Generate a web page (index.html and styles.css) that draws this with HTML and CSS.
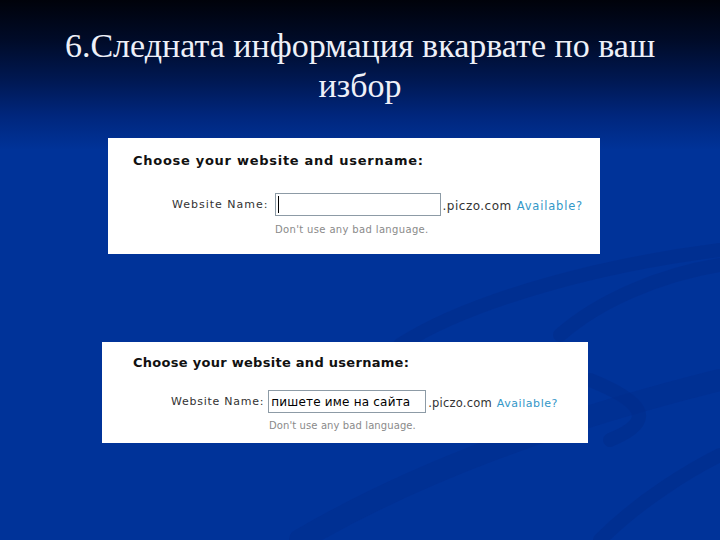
FILE: index.html
```html
<!DOCTYPE html>
<html lang="bg">
<head>
<meta charset="utf-8">
<title>Слайд 6</title>
<link rel="stylesheet" href="styles.css">
</head>
<body>
<div class="slide">
  <svg class="swirls" width="720" height="540" viewBox="0 0 720 540" aria-hidden="true">
    <path d="M400 345 C 470 300, 600 265, 720 250" />
    <path d="M560 335 C 600 300, 660 275, 720 265" />
    <path d="M590 380 C 640 400, 660 420, 610 440" />
    <path d="M300 540 C 420 470, 560 420, 720 380" class="wide" />
    <path d="M600 540 C 640 500, 690 470, 720 455" />
  </svg>
  <h1 class="title">6.Следната информация вкарвате по ваш избор</h1>

  <section class="panel panel-one">
    <h2 class="panel-heading">Choose your website and username:</h2>
    <div class="field-row">
      <span class="field-label">Website Name:</span>
      <span class="field-input"><span class="caret"></span></span>
      <span class="domain">.piczo.com</span>
      <span class="avail">Available?</span>
    </div>
    <p class="hint">Don't use any bad language.</p>
  </section>

  <section class="panel panel-two">
    <h2 class="panel-heading">Choose your website and username:</h2>
    <div class="field-row">
      <span class="field-label">Website Name:</span>
      <span class="field-input"><span class="typed">пишете име на сайта</span></span>
      <span class="domain">.piczo.com</span>
      <span class="avail">Available?</span>
    </div>
    <p class="hint">Don't use any bad language.</p>
  </section>
</div>
</body>
</html>
```

FILE: styles.css
```css
html, body {
  margin: 0;
  padding: 0;
}

body {
  width: 720px;
  height: 540px;
  overflow: hidden;
}

.slide {
  position: relative;
  width: 720px;
  height: 540px;
  background: linear-gradient(180deg, #00020a 0px, #000b28 40px, #001852 80px, #00267c 115px, #003399 150px, #003399 540px);
  display: flex;
  flex-direction: column;
}

.swirls {
  position: absolute;
  left: 0;
  top: 0;
  pointer-events: none;
}

.swirls path {
  fill: none;
  stroke: #002d8c;
  stroke-width: 14;
  stroke-linecap: round;
  opacity: 0.6;
}

.swirls path.wide {
  stroke-width: 22;
  opacity: 0.45;
}

.title {
  position: relative;
  margin: 26px auto 0;
  width: 640px;
  height: 80px;
  text-align: center;
  font-family: "Liberation Serif", "DejaVu Serif", serif;
  font-weight: normal;
  font-size: 34px;
  line-height: 40px;
  color: #eef0f8;
}

.panel {
  position: relative;
  background: #ffffff;
  box-sizing: border-box;
  font-family: "DejaVu Sans", Verdana, sans-serif;
}

.panel-one {
  margin: 32px 0 0 108px;
  width: 492px;
  height: 116px;
  padding: 14px 0 0 25px;
}

.panel-two {
  margin: 88px 0 0 102px;
  width: 486px;
  height: 101px;
  padding: 12px 0 0 31px;
}

.panel-heading {
  margin: 0;
  font-size: 13px;
  font-weight: bold;
  letter-spacing: 0.72px;
  line-height: 18px;
  color: #111111;
}

.panel-two .panel-heading {
  letter-spacing: 0.28px;
}

.field-row {
  display: flex;
  align-items: center;
}

.panel-one .field-row {
  margin: 23px 0 0 39px;
}

.panel-two .field-row {
  margin: 18px 0 0 38px;
}

.field-label {
  font-size: 11px;
  letter-spacing: 1px;
  color: #333333;
  margin-right: 6px;
}

.panel-two .field-label {
  letter-spacing: 0.75px;
  margin-right: 4px;
}

.field-input {
  box-sizing: border-box;
  display: flex;
  align-items: center;
  height: 23px;
  border: 1px solid #8d9ba6;
  background: #ffffff;
  padding-left: 2px;
}

.panel-one .field-input {
  width: 166px;
}

.panel-two .field-input {
  width: 158px;
}

.caret {
  display: block;
  width: 1px;
  height: 17px;
  background: #000000;
}

.typed {
  font-size: 12px;
  letter-spacing: 0.2px;
  color: #000000;
  white-space: nowrap;
}

.domain {
  font-size: 12px;
  letter-spacing: 0.5px;
  color: #333333;
  margin-left: 2px;
  margin-top: 3px;
}

.panel-two .domain {
  font-size: 11.5px;
  letter-spacing: 0.2px;
}

.avail {
  font-size: 11.5px;
  letter-spacing: 0.8px;
  color: #3397c8;
  margin-left: 5px;
  margin-top: 3px;
}

.panel-two .avail {
  font-size: 11px;
  letter-spacing: 0.55px;
}

.hint {
  margin: 0;
  font-size: 10px;
  letter-spacing: 0.35px;
  color: #8a8a8a;
}

.panel-one .hint {
  margin: 8px 0 0 142px;
}

.panel-two .hint {
  margin: 7px 0 0 136px;
  letter-spacing: 0.1px;
}
```
